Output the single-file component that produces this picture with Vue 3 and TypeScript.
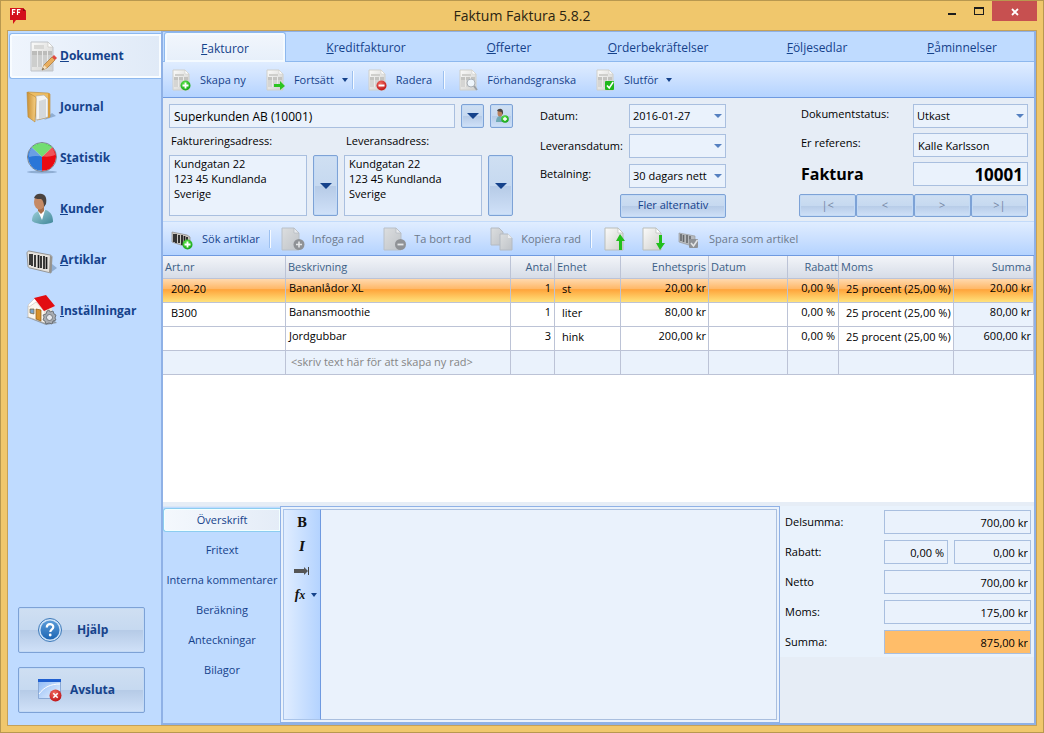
<script setup lang="ts">
import { ref } from 'vue'

interface NavItem { key: string; rest: string; pre?: string; icon: string }
interface Row {
  art: string; text: string; qty: string; unit: string; price: string
  date: string; discount: string; vat: string; sum: string
}

const nav: NavItem[] = [
  { key: 'D', rest: 'okument', icon: 'n-doc' },
  { key: 'J', rest: 'ournal', icon: 'n-folder' },
  { pre: 'S', key: 't', rest: 'atistik', icon: 'n-pie' },
  { key: 'K', rest: 'under', icon: 'n-person' },
  { key: 'A', rest: 'rtiklar', icon: 'n-barcode' },
  { key: 'I', rest: 'nställningar', icon: 'n-house' },
]
const activeNav = ref(0)

const tabs = ['Fakturor', 'Kreditfakturor', 'Offerter', 'Orderbekräftelser', 'Följesedlar', 'Påminnelser']
const activeTab = ref(0)

const rows: Row[] = [
  { art: '200-20', text: 'Bananlådor XL', qty: '1', unit: 'st', price: '20,00 kr', date: '', discount: '0,00 %', vat: '25 procent (25,00 %)', sum: '20,00 kr' },
  { art: 'B300', text: 'Banansmoothie', qty: '1', unit: 'liter', price: '80,00 kr', date: '', discount: '0,00 %', vat: '25 procent (25,00 %)', sum: '80,00 kr' },
  { art: '', text: 'Jordgubbar', qty: '3', unit: 'hink', price: '200,00 kr', date: '', discount: '0,00 %', vat: '25 procent (25,00 %)', sum: '600,00 kr' },
]
const selectedRow = ref(0)

const noteTabs = ['Överskrift', 'Fritext', 'Interna kommentarer', 'Beräkning', 'Anteckningar', 'Bilagor']
const activeNote = ref(0)

const customer = ref('Superkunden AB (10001)')
const address = 'Kundgatan 22\n123 45 Kundlanda\nSverige'
const billing = ref(address)
const delivery = ref(address)
const reference = ref('Kalle Karlsson')
const number = ref('10001')
const newRow = ref('')
const heading = ref('')
</script>

<template>
  <div class="window">
    <svg class="defs" aria-hidden="true">
      <defs>
        <linearGradient id="g-page" x1="0" y1="0" x2="1" y2="1"><stop offset="0" stop-color="#fbfbfa" /><stop offset="1" stop-color="#cfcfcd" /></linearGradient>
        <linearGradient id="g-gray" x1="0" y1="0" x2="1" y2="1"><stop offset="0" stop-color="#dcdedf" /><stop offset="1" stop-color="#bfc3c8" /></linearGradient>
        <linearGradient id="g-fold" x1="0" y1="0" x2="1" y2="0"><stop offset="0" stop-color="#c98f33" /><stop offset="1" stop-color="#f6cf83" /></linearGradient>
        <linearGradient id="g-teal" x1="0" y1="0" x2="1" y2="1"><stop offset="0" stop-color="#9fd0d8" /><stop offset="1" stop-color="#3f8799" /></linearGradient>
        <linearGradient id="g-help" x1="0" y1="0" x2="0" y2="1"><stop offset="0" stop-color="#5b9bd8" /><stop offset="1" stop-color="#1d66b4" /></linearGradient>
        <linearGradient id="g-win" x1="0" y1="0" x2="1" y2="1"><stop offset="0" stop-color="#8db9f6" /><stop offset="1" stop-color="#eaf3ff" /></linearGradient>
        <radialGradient id="g-red" cx=".4" cy=".3" r=".8"><stop offset="0" stop-color="#f06a60" /><stop offset="1" stop-color="#b90a10" /></radialGradient>
        <radialGradient id="g-green" cx=".4" cy=".3" r=".8"><stop offset="0" stop-color="#5fe34a" /><stop offset="1" stop-color="#0c9d12" /></radialGradient>

        <symbol id="sheet" viewBox="0 0 20 22">
          <path d="M1 1h12l4 4v16H1z" fill="url(#g-page)" stroke="#cfcfca" />
          <path d="M3 5h9v2H3z" fill="#cfcfcc" />
          <path d="M2 8h14v3H2z" fill="#c3c3c0" /><path d="M2 11h14v7H2z" fill="#d5d5d3" />
          <path d="M6.500 8v10M11.500 8v10" stroke="#ebebe9" />
          <path d="M13 1v4h4z" fill="#fff" stroke="#cfcfca" stroke-width=".6" />
        </symbol>
        <symbol id="blank" viewBox="0 0 24 24">
          <path d="M1 1h13l5 5v17H1z" fill="url(#g-page)" stroke="#b9bdb9" />
          <path d="M14 1v5h5z" fill="#fff" stroke="#b9bdb9" stroke-width=".7" />
        </symbol>
        <symbol id="blank-gray" viewBox="0 0 24 24">
          <path d="M1 1h12l5 5v17H1z" fill="url(#g-gray)" stroke="#b9c0c8" />
          <path d="M13 1v5h5z" fill="#e6e9ec" stroke="#b4bac2" stroke-width=".7" />
        </symbol>

        <symbol id="n-doc" viewBox="0 0 32 32">
          <path d="M5 2h17l5 5v24H5z" fill="url(#g-page)" stroke="#bfc3c9" />
          <path d="M8 5h10v4H8z" fill="#d8d8d6" />
          <path d="M6 11h20v4H6z" fill="#bcbcba" /><path d="M6 15h20v12H6z" fill="#cdcecd" />
          <path d="M11.500 11v16M16.500 11v16M21.500 11v16" stroke="#e9e9e8" />
          <path d="M22 2v5h5z" fill="#fff" stroke="#c5c5c0" stroke-width=".6" />
          <path d="M16 30l2-5 8-8 3 3-8 8z" fill="#e9ae5e" stroke="#a77432" stroke-width=".7" />
          <path d="M16 30l2-5 3 3z" fill="#f4e0be" /><path d="M16 30l1-2 1 1z" fill="#333" />
          <path d="M26 17l2-2 3 3-2 2z" fill="#e04a43" />
        </symbol>
        <symbol id="n-folder" viewBox="0 0 32 32">
          <path d="M18 29l12-4-4-3z" fill="#6f8fb6" opacity=".6" />
          <path d="M2 1l20 1 2 1v23l-13 3z" fill="#edbd62" stroke="#b98634" stroke-width=".6" />
          <path d="M10 5l8-1 4 4v18l-12 3z" fill="#f4f4f2" stroke="#aaa" stroke-width=".6" />
          <path d="M13 10l7-2v18l-7 2z" fill="#d4d8dc" />
          <path d="M22 2l2 1v23l-2 1z" fill="#d79d3d" />
          <path d="M1 1l7 4c2 1 2 2 2 4l-1 22-7-5z" fill="url(#g-fold)" stroke="#b98634" stroke-width=".6" />
        </symbol>
        <symbol id="n-pie" viewBox="0 0 32 32">
          <ellipse cx="16" cy="30" rx="15" ry="1.500" fill="#6f8fb6" opacity=".6" />
          <circle cx="16" cy="15" r="14.500" fill="#e9eef3" stroke="#76828f" />
          <path d="M16 15L6 5.500A13.700 13.700 0 0 1 26 5.500z" fill="#35cf35" />
          <path d="M16 15L26 5.500A13.700 13.700 0 0 1 16 28.700z" fill="#ea0a12" />
          <path d="M16 15v13.700A13.700 13.700 0 0 1 6 5.500z" fill="#2a76d8" />
          <path d="M3 15a13 12.500 0 0 1 26-2C20 17 12 12 3 15z" fill="#fff" opacity=".3" />
        </symbol>
        <symbol id="n-person" viewBox="0 0 32 32">
          <path d="M6 28c0-6 3-9 7-10l7-1c5 2 7 6 7 12-5 3-16 3-21-1z" fill="url(#g-teal)" />
          <path d="M12 18l4 9 3-10z" fill="#fff" />
          <path d="M12 13h6v5l-3 3-3-3z" fill="#a86f4c" />
          <ellipse cx="13.500" cy="9" rx="5.500" ry="7.500" fill="#c58a66" />
          <path d="M8 5c1-4 5-5 8-4 4 1 5 5 4 10l-2 3c0-4-1-7-3-8-2 0-5 0-7-1z" fill="#4a4340" />
        </symbol>
        <symbol id="n-barcode" viewBox="0 0 32 32">
          <path d="M24 29l7-5-5-4z" fill="#6f8fb6" opacity=".6" />
          <path d="M3 7l21 4c1 0 2 1 2 2l-1 16-21-5c-1 0-2-1-2-2L1 9c0-1 1-2 2-2z" fill="#e4e1dc" stroke="#85837f" stroke-width=".8" />
          <path d="M24 11l2 2-1 16-2-1z" fill="#97938b" />
          <path d="M4 10v11M6 10v12M9 11v12M12.500 11v13M15 12v12M18 12v13M20.500 13v12" stroke="#1c1c1c" stroke-width="1.700" />
        </symbol>
        <symbol id="n-house" viewBox="0 0 32 32">
          <path d="M0 22l20 8 11-2-7-6z" fill="#8f9aa5" />
          <path d="M2 11l8-7 9 9v15L2 22z" fill="#fbf7f0" stroke="#b9b2a6" stroke-width=".6" />
          <path d="M18 13l8-1v13l-7 3z" fill="#e6e1d8" />
          <path d="M4 14h4v5l-4-1z" fill="#7ba6cf" stroke="#7a6230" stroke-width=".7" />
          <path d="M10 14l5 1v11l-5-2z" fill="#d8922c" stroke="#8e5a14" stroke-width=".7" />
          <path d="M2 10l7-7 10 12-1 1-8-9-7 5z" fill="#fff" stroke="#c9bfb5" stroke-width=".6" />
          <path d="M8 3l12-3 9 11-11 5z" fill="#e20d12" />
          <g fill="#a9adb2" stroke="#5f646a" stroke-width=".8">
            <path d="M21 16l2-1 1 2 3-1 1 3 2 1-1 3 1 2-3 1-1 3-3-1-3 1-1-3-2-1 1-3-1-2 3-1z" />
            <circle cx="23.500" cy="22.500" r="3" fill="#e7eaee" />
          </g>
        </symbol>
      </defs>
    </svg>

    <header class="titlebar">
      <svg class="logo" viewBox="0 0 18 18" aria-hidden="true">
        <path d="M1 1h13l3 3v9H7l-3 4v-4H1z" fill="#d3101c" /><path d="M14 1l3 3h-3z" fill="#8f0710" />
        <path d="M3.500 8V2.700h3M3.500 5.300h2.500M8.500 8V2.700h3M8.500 5.300h2.500" fill="none" stroke="#fff" stroke-width="1.200" />
      </svg>
      <h1>Faktum Faktura 5.8.2</h1>
      <div class="controls">
        <button type="button" aria-label="Minimera"><svg width="30" height="20"><path d="M12 12h8v2h-8z" fill="#1c1c1c" /></svg></button>
        <button type="button" aria-label="Maximera"><svg width="26" height="20"><path d="M8 6h10v8H8zM9 8v5h8V8z" fill="#1c1c1c" fill-rule="evenodd" /></svg></button>
        <button type="button" class="close" aria-label="Stäng"><svg width="45" height="20"><path d="M20 8l6 6M26 8l-6 6" stroke="#fff" stroke-width="1.800" /></svg></button>
      </div>
    </header>

    <div class="frame">
      <aside class="sidebar">
        <nav class="nav">
          <button v-for="(n, i) in nav" :key="n.icon" type="button" class="nav-item" :class="{ active: i === activeNav }" @click="activeNav = i">
            <svg aria-hidden="true"><use :href="'#' + n.icon" /></svg>
            <span>{{ n.pre }}<u>{{ n.key }}</u>{{ n.rest }}</span>
          </button>
        </nav>
        <div class="side-actions">
          <button type="button" class="btn big">
            <svg viewBox="0 0 26 26" aria-hidden="true">
              <circle cx="13" cy="13" r="11.500" fill="#cfe3f8" stroke="#3b78b8" /><circle cx="13" cy="13" r="9.500" fill="url(#g-help)" />
              <path d="M9.800 10.500c0-4.500 6.500-4.300 6.500-.5 0 2.500-3 2.300-3 5" fill="none" stroke="#fff" stroke-width="2.200" /><circle cx="13.200" cy="18" r="1.400" fill="#fff" />
            </svg>
            <span class="wide">Hjälp</span>
          </button>
          <button type="button" class="btn big">
            <svg viewBox="0 0 26 26" aria-hidden="true">
              <path d="M1.500 2.500h22v19h-22z" fill="url(#g-win)" stroke="#8aa9d6" /><path d="M1 2h23v3H1z" fill="#1f5fd0" />
              <path d="M2 17C7 10 14 7 23 7" fill="none" stroke="#fff" />
              <circle cx="18.500" cy="18.500" r="6" fill="url(#g-red)" /><path d="M16.300 16.300l4.400 4.400M20.700 16.300l-4.400 4.400" stroke="#fff" stroke-width="1.600" />
            </svg>
            <span>Avsluta</span>
          </button>
        </div>
      </aside>

      <main class="main">
        <nav class="tabs">
          <button v-for="(t, i) in tabs" :key="t" type="button" class="tab" :class="{ active: i === activeTab }" @click="activeTab = i"><span><u>{{ t[0] }}</u>{{ t.slice(1) }}</span></button>
        </nav>

        <div class="toolbar first">
          <button type="button" class="tool">
            <svg viewBox="0 0 20 22"><use href="#sheet" width="20" height="22" /><circle cx="13.500" cy="16.500" r="5" fill="url(#g-green)" /><path d="M13.500 13.500v6M10.500 16.500h6" stroke="#fff" stroke-width="1.800" /></svg>Skapa ny
          </button>
          <button type="button" class="tool drop">
            <svg viewBox="0 0 20 22"><use href="#sheet" width="20" height="22" /><path d="M8 15h6v-3l5 5-5 4v-3H8z" fill="#2cc51f" /></svg>Fortsätt<i class="caret"></i>
          </button>
          <span class="sep"></span>
          <button type="button" class="tool">
            <svg viewBox="0 0 20 22"><use href="#sheet" width="20" height="22" /><circle cx="13.500" cy="16.500" r="5" fill="url(#g-red)" /><path d="M10.500 16.500h6" stroke="#fff" stroke-width="2" /></svg>Radera
          </button>
          <span class="sep"></span>
          <button type="button" class="tool">
            <svg viewBox="0 0 20 22"><use href="#sheet" width="20" height="22" /><circle cx="12" cy="14" r="4" fill="#eef5fb" stroke="#aab0b6" /><path d="M15 17l3 4" stroke="#9aa0a6" stroke-width="1.800" /></svg>Förhandsgranska
          </button>
          <button type="button" class="tool drop">
            <svg viewBox="0 0 20 22"><use href="#sheet" width="20" height="22" /><rect x="9" y="12" width="9" height="9" rx="1" fill="#1fb81c" /><path d="M11 16.500l2.200 2.500 4-6" fill="none" stroke="#fff" stroke-width="1.600" /></svg>Slutför<i class="caret"></i>
          </button>
        </div>

        <form class="form" @submit.prevent>
          <div class="customer">
            <div class="line">
              <input v-model="customer" class="field name" aria-label="Kund">
              <button type="button" class="btn small" aria-label="Välj kund"><i class="arrow"></i></button>
              <button type="button" class="btn small" aria-label="Ny kund">
                <svg width="16" height="16" viewBox="0 0 16 16"><path d="M2 14c0-4 2-6 4-6s4 2 4 6z" fill="#6fa9b4" /><ellipse cx="6" cy="5" rx="2.500" ry="3.500" fill="#b9805c" /><path d="M3 3c1-3 6-3 6 1v3L7.500 4z" fill="#4b4441" /><circle cx="11" cy="11" r="3.800" fill="url(#g-green)" /><path d="M11 9v4M9 11h4" stroke="#fff" stroke-width="1.300" /></svg>
              </button>
            </div>
            <div class="addresses">
              <div class="address">
                <label for="billing">Faktureringsadress:</label>
                <div class="line"><textarea id="billing" v-model="billing" class="field"></textarea><button type="button" class="btn tall" aria-label="Välj faktureringsadress"><i class="arrow"></i></button></div>
              </div>
              <div class="address">
                <label for="delivery">Leveransadress:</label>
                <div class="line"><textarea id="delivery" v-model="delivery" class="field"></textarea><button type="button" class="btn tall" aria-label="Välj leveransadress"><i class="arrow"></i></button></div>
              </div>
            </div>
          </div>

          <div class="terms">
            <label for="date">Datum:</label>
            <span class="select"><select id="date" class="field"><option>2016-01-27</option></select></span>
            <label for="ddate">Leveransdatum:</label>
            <span class="select"><select id="ddate" class="field"><option></option></select></span>
            <label for="pay" class="raised">Betalning:</label>
            <span class="select"><select id="pay" class="field"><option>30 dagars nett</option></select></span>
            <button type="button" class="btn more">Fler alternativ</button>
          </div>

          <div class="status">
            <label for="status" class="raised">Dokumentstatus:</label>
            <span class="select"><select id="status" class="field"><option>Utkast</option></select></span>
            <label for="ref" class="raised">Er referens:</label>
            <input id="ref" v-model="reference" class="field">
            <label for="no" class="strong">Faktura</label>
            <input id="no" v-model="number" class="field strong">
            <div class="pager">
              <button type="button" class="btn">|&lt;</button>
              <button type="button" class="btn">&lt;</button>
              <button type="button" class="btn">&gt;</button>
              <button type="button" class="btn">&gt;|</button>
            </div>
          </div>
        </form>

        <div class="toolbar second">
          <button type="button" class="tool">
            <svg viewBox="0 0 24 24"><path d="M1 5l15 3 3 2v9l-3 1L1 15z" fill="#c9c6c0" stroke="#8b8a88" stroke-width=".7" /><path d="M3 7v8M5 7v9M8 8v8M11 8v10M13.500 9v8M16 10v7" stroke="#1a1a1a" stroke-width="1.700" /><circle cx="16.500" cy="17.500" r="5" fill="url(#g-green)" /><path d="M16.500 14.500v6M13.500 17.500h6" stroke="#fff" stroke-width="1.800" /></svg>Sök artiklar
          </button>
          <span class="sep"></span>
          <button type="button" class="tool off">
            <svg viewBox="0 0 24 24"><use href="#blank-gray" width="24" height="24" /><circle cx="18" cy="17.500" r="5.500" fill="#8f9296" /><path d="M18 14.500v6M15 17.500h6" stroke="#e4e6e8" stroke-width="1.600" /></svg>Infoga rad
          </button>
          <button type="button" class="tool off">
            <svg viewBox="0 0 24 24"><use href="#blank-gray" width="24" height="24" /><circle cx="17.500" cy="17.500" r="5.500" fill="#8f9296" /><path d="M14.500 17.500h6" stroke="#e4e6e8" stroke-width="1.800" /></svg>Ta bort rad
          </button>
          <button type="button" class="tool off">
            <svg viewBox="0 0 24 24"><path d="M1 1h8l4 4v13H1z" fill="url(#g-gray)" stroke="#b4bac2" /><path d="M10 7h8l4 4v12H10z" fill="url(#g-gray)" stroke="#b4bac2" /><path d="M18 7v4h4z" fill="#e9ebee" /></svg>Kopiera rad
          </button>
          <span class="sep"></span>
          <button type="button" class="tool icon" aria-label="Flytta upp">
            <svg viewBox="0 0 24 24"><use href="#blank" width="24" height="24" /><path d="M12 14l4-7 5 7h-3v9h-3v-9z" fill="#21bf1c" /></svg>
          </button>
          <button type="button" class="tool icon" aria-label="Flytta ner">
            <svg viewBox="0 0 24 24"><use href="#blank" width="24" height="24" /><path d="M14 16l4 7 5-7h-3V8h-3v8z" fill="#21bf1c" /></svg>
          </button>
          <button type="button" class="tool off">
            <svg viewBox="0 0 24 24"><path d="M1 6l16 3v9l-3 1L1 15z" fill="#b7babd" stroke="#999c9f" stroke-width=".7" /><path d="M3 7v7M5.500 8v7M9 8v8M12 9v8" stroke="#65686b" stroke-width="1.600" /><rect x="11" y="12" width="9" height="9" rx="1" fill="#8f9296" /><path d="M13 16l2.500 3 4-6" fill="none" stroke="#e2e4e6" stroke-width="1.600" /></svg>Spara som artikel
          </button>
        </div>

        <div class="grid">
          <table>
            <colgroup><col class="c-art"><col><col class="c-qty"><col class="c-unit"><col class="c-price"><col class="c-date"><col class="c-disc"><col class="c-vat"><col class="c-sum"></colgroup>
            <thead>
              <tr>
                <th>Art.nr</th><th>Beskrivning</th><th class="r">Antal</th><th>Enhet</th><th class="r">Enhetspris</th>
                <th>Datum</th><th class="r flush">Rabatt</th><th>Moms</th><th class="r">Summa</th>
              </tr>
            </thead>
            <tbody>
              <tr v-for="(r, i) in rows" :key="i" :class="{ selected: i === selectedRow }" @click="selectedRow = i">
                <td class="combo">{{ r.art }}</td><td>{{ r.text }}</td><td class="r">{{ r.qty }}</td><td class="combo">{{ r.unit }}</td><td class="r tight">{{ r.price }}</td>
                <td>{{ r.date }}</td><td class="r">{{ r.discount }}</td><td class="combo">{{ r.vat }}</td><td class="r tight total">{{ r.sum }}</td>
              </tr>
              <tr class="new">
                <td></td><td><input v-model="newRow" aria-label="Ny rad" placeholder="<skriv text här för att skapa ny rad>"></td>
                <td></td><td></td><td></td><td></td><td></td><td></td><td></td>
              </tr>
            </tbody>
          </table>
        </div>

        <section class="bottom">
          <nav class="notes">
            <button v-for="(t, i) in noteTabs" :key="t" type="button" class="note" :class="{ active: i === activeNote }" @click="activeNote = i">{{ t }}</button>
          </nav>
          <div class="editor">
            <div class="format">
              <button type="button" class="bold">B</button>
              <button type="button" class="italic">I</button>
              <button type="button" aria-label="Tabb"><svg width="16" height="10"><path d="M0 3h10V1l4 4-4 4V7H0z" fill="#555" /><path d="M14.500 1v8" stroke="#444" /></svg></button>
              <button type="button" class="fx"><em>f<small>x</small></em><i class="caret"></i></button>
            </div>
            <textarea v-model="heading" aria-label="Överskrift"></textarea>
          </div>
          <div class="totals">
            <div class="sums">
              <label for="t1">Delsumma:</label><input id="t1" class="field" value="700,00 kr" readonly>
              <label for="t2">Rabatt:</label><div class="pair"><input id="t2" class="field pct" value="0,00 %"><input class="field" aria-label="Rabatt i kronor" value="0,00 kr"></div>
              <label for="t3">Netto</label><input id="t3" class="field" value="700,00 kr" readonly>
              <label for="t4">Moms:</label><input id="t4" class="field" value="175,00 kr" readonly>
              <label for="t5">Summa:</label><input id="t5" class="field grand" value="875,00 kr" readonly>
            </div>
          </div>
        </section>
      </main>
    </div>
  </div>
</template>

<style>
body { margin: 0; }
</style>

<style scoped>
* { box-sizing: border-box; }
.window {
  min-height: 100vh; display: flex; flex-direction: column; padding: 0 6px 6px;
  border: 1px solid #b8984f; background: #f0c76c; color: #000;
  font: 11px/16px "Open Sans", "Noto Sans", sans-serif;
}
button, input, textarea, select { font: inherit; color: inherit; margin: 0; }
button { padding: 0; border: 0; background: none; cursor: pointer; }
.defs { position: absolute; width: 0; height: 0; }

.titlebar { height: 29px; display: grid; grid-template-columns: 1fr auto 1fr; align-items: center; }
.logo { width: 18px; height: 18px; margin-left: 2px; }
h1 { margin: 0; font-size: 14px; line-height: 20px; font-weight: 400; color: #2b2412; }
.controls { display: flex; align-self: start; justify-content: flex-end; }
.controls button { display: flex; height: 20px; }
.controls .close { background: #c75050; }

.frame { flex: 1; display: flex; border: 1px solid #c4a15a; background: #bfdbff; }
.sidebar { flex: none; width: 153px; display: flex; flex-direction: column; justify-content: space-between; }
.nav { display: flex; flex-direction: column; gap: 5px; padding: 2px 0 0 1px; }
.nav-item {
  display: flex; align-items: center; gap: 2px; height: 46px; padding-left: 16px;
  border: 1px solid transparent; border-right: 0; color: #15428b; font-size: 12px; font-weight: 700; line-height: 16px;
}
.nav-item svg { width: 32px; height: 32px; }
.nav-item.active { border-color: #8db8ee; border-radius: 3px 0 0 3px; background: linear-gradient(90deg, #eff5fd, #e0eaf7); box-shadow: inset 0 0 0 2px #f8fcff; }
.side-actions { display: flex; flex-direction: column; gap: 14px; padding: 0 16px 12px 10px; }

.btn {
  display: flex; align-items: center; justify-content: center; border: 1px solid #7da2d6; border-radius: 2px; color: #15428b;
  background: linear-gradient(#cfdff2, #c6d9f0 50%, #b6cbe7 51%, #d0e1f8); box-shadow: inset 0 0 0 1px #c3daf5;
}
.btn.big { height: 46px; justify-content: flex-start; gap: 7px; padding-left: 18px; font-size: 12px; font-weight: 700; }
.btn.big svg { width: 26px; height: 26px; }
.btn.big .wide { padding: 0 7px; }

.main { flex: 1; min-width: 0; display: flex; flex-direction: column; border: 2px solid #8fb1e6; border-top: 1px solid #8fb1e6; background: #e6edf6; }
.tabs { display: grid; grid-template-columns: 123fr 160fr 126fr 172fr 146fr 144fr; height: 30px; background: #bfdbff; border-bottom: 1px solid #8db8ee; }
.tab { height: 30px; padding-top: 2px; color: #15428b; font-size: 12px; line-height: 16px; border: 1px solid transparent; }
.tab.active { margin-left: 1px; border-color: #8db8ee; border-bottom: 0; border-radius: 3px 3px 0 0; background: linear-gradient(#f2f6fc, #e6effa); box-shadow: inset 0 0 0 2px #f4faff; }

.toolbar { display: flex; align-items: center; height: 36px; border-bottom: 1px solid #6f9ae0; background: linear-gradient(#e0edff, #cbe0ff 50%, #b4d3ff); color: #15428b; }
.toolbar.second { height: 35px; border-top: 1px solid #c3dbfa; }
.tool { display: flex; align-items: center; gap: 8px; padding: 0 11px 0 9px; white-space: nowrap; }
.tool svg { flex: none; width: 20px; height: 22px; }
.tool.drop { padding-right: 4px; }
.sep { width: 1px; height: 18px; background: #f6faff; border-left: 1px solid #9cc0f0; box-sizing: content-box; margin-right: 5px; }
.second .tool { padding-left: 8px; gap: 7px; }
.second .tool.icon { padding: 0 4px 0 10px; }
.second .tool svg { width: 24px; height: 24px; }
.second .sep { margin: 0 2px 0 -2px; }
.tool.off { color: #6d7a8c; }
.caret { width: 0; height: 0; border: 3px solid transparent; border-top: 4px solid #15428b; border-bottom: 0; }
.arrow { width: 0; height: 0; border: 6px solid transparent; border-top-color: #15428b; border-bottom: 0; }

.form { display: flex; padding: 6px 6px 4px; height: 123px; }
.field { display: block; width: 100%; min-width: 0; height: 24px; padding: 0 4px; border: 1px solid #a9bfdf; border-radius: 0; background: #eaf2fc; outline: 0; resize: none; }
.customer { flex: none; width: 344px; }
.line { display: flex; }
.name { flex: 1; font-size: 12px; }
.btn.small { width: 23px; height: 24px; margin-left: 6px; }
.addresses { display: flex; gap: 6px; margin-top: 5px; }
.address { flex: 1; }
.address label { display: block; margin: 0 0 6px 2px; }
.address .field { height: 61px; padding: 0 4px; line-height: 15px; overflow: hidden; }
.btn.tall { flex: none; width: 25px; margin-left: 6px; }
.terms { flex: none; width: 186px; margin-left: 27px; display: grid; grid-template-columns: 89px 97px; grid-template-rows: repeat(3, 24px); row-gap: 6px; align-items: center; align-content: start; }
.raised { padding-bottom: 4px; }
.select { position: relative; display: block; }
.select::after { content: ""; position: absolute; right: 4px; top: 10px; border: 4px solid transparent; border-top-color: #5580c0; border-bottom: 0; pointer-events: none; }
.select .field { appearance: none; padding: 0 3px; white-space: nowrap; }
.more { grid-column: 1 / -1; justify-self: end; width: 106px; height: 24px; padding-bottom: 2px; }
.status { flex: none; width: 229px; margin-left: auto; display: grid; grid-template-columns: 114px 115px; grid-auto-rows: 24px; row-gap: 5px; align-items: center; align-content: start; }
.status label { padding-left: 2px; }
.status .strong { font-size: 16px; font-weight: 700; line-height: 22px; }
.status input.strong { font-size: 17px; text-align: right; }
.pager { grid-column: 1 / -1; display: grid; grid-template-columns: repeat(4, 1fr); margin-top: 4px; }
.pager .btn { height: 23px; color: #7486a3; }

.grid { flex: 1; background: #fff; }
table { width: 100%; table-layout: fixed; border-collapse: separate; border-spacing: 0; }
.c-art { width: 123px; } .c-qty { width: 44px; } .c-unit { width: 66px; } .c-price { width: 88px; }
.c-date { width: 79px; } .c-disc { width: 51px; } .c-vat { width: 115px; } .c-sum { width: 80px; }
th, td { padding: 0 3px 6px; height: 24px; line-height: 16px; text-align: left; font-weight: 400; white-space: nowrap; border-right: 1px solid #bcc3d6; border-bottom: 1px solid #bcc3d6; }
th { height: 23px; padding: 0 2px; color: #3c5f87; background: linear-gradient(#f3f5f9, #d6dce7); }
td.combo { padding: 0 0 4px 7px; }
td.combo:first-child { padding-left: 8px; }
.r { text-align: right; }
th.flush { padding-right: 0; }
td.tight { padding-right: 2px; }
.total, .new td { background: #eaf2fc; }
.selected td { background: linear-gradient(#ffd9ae, #ffb765 44%, #ffa43b 46%, #ffe27c); }
.new td { padding: 0 5px 1px; }
.new input { display: block; width: 100%; border: 0; padding: 0; background: none; outline: 0; }
.new input::placeholder { color: #858585; opacity: 1; }

.bottom { flex: none; display: flex; height: 221px; padding-top: 4px; }
.notes { flex: none; width: 117px; display: flex; flex-direction: column; gap: 6px; padding-top: 1px; background: #bfdbff; border-top: 1px solid #d9e6f6; }
.note { height: 24px; color: #15428b; border: 1px solid transparent; border-right: 0; white-space: nowrap; }
.note.active { border-color: #8ccdf0; border-radius: 3px 0 0 3px; background: linear-gradient(90deg, #f4f8fd, #e4ecf7); box-shadow: inset 0 0 0 1px #f2ffff; }
.editor { flex: 1; display: flex; padding: 2px; border: 1px solid #8fb1e6; background: #eaf2fc; }
.format { flex: none; width: 38px; display: flex; flex-direction: column; align-items: center; padding-top: 1px; background: linear-gradient(90deg, #e0edff, #b4d3ff); border: 1px solid #a9c4ea; border-right: 1px solid #6f9ae0; }
.format button { display: flex; align-items: center; justify-content: center; width: 34px; height: 24px; color: #111; font: 12px/16px "DejaVu Serif", serif; }
.format .bold { font-weight: 700; }
.format .italic { font-style: italic; font-weight: 700; }
.format .fx { gap: 6px; padding-left: 8px; font: 700 14px/16px "Liberation Serif", serif; }
.fx small { font-size: 12px; }
.editor textarea { flex: 1; min-width: 0; border: 1px solid #a9bfdf; border-left: 0; background: #eaf2fc; resize: none; outline: 0; }
.totals { flex: none; width: 254px; }
.sums { display: grid; grid-template-columns: 99px 1fr; row-gap: 6px; align-items: center; padding: 4px 3px 3px 5px; background: #e9f2fc; }
.sums .field { text-align: right; padding-right: 2px; }
.pair { display: grid; grid-template-columns: 64px 1fr; gap: 6px; }
.sums .pct { padding-right: 3px; }
.sums .grand { background: #ffbd69; }
</style>
